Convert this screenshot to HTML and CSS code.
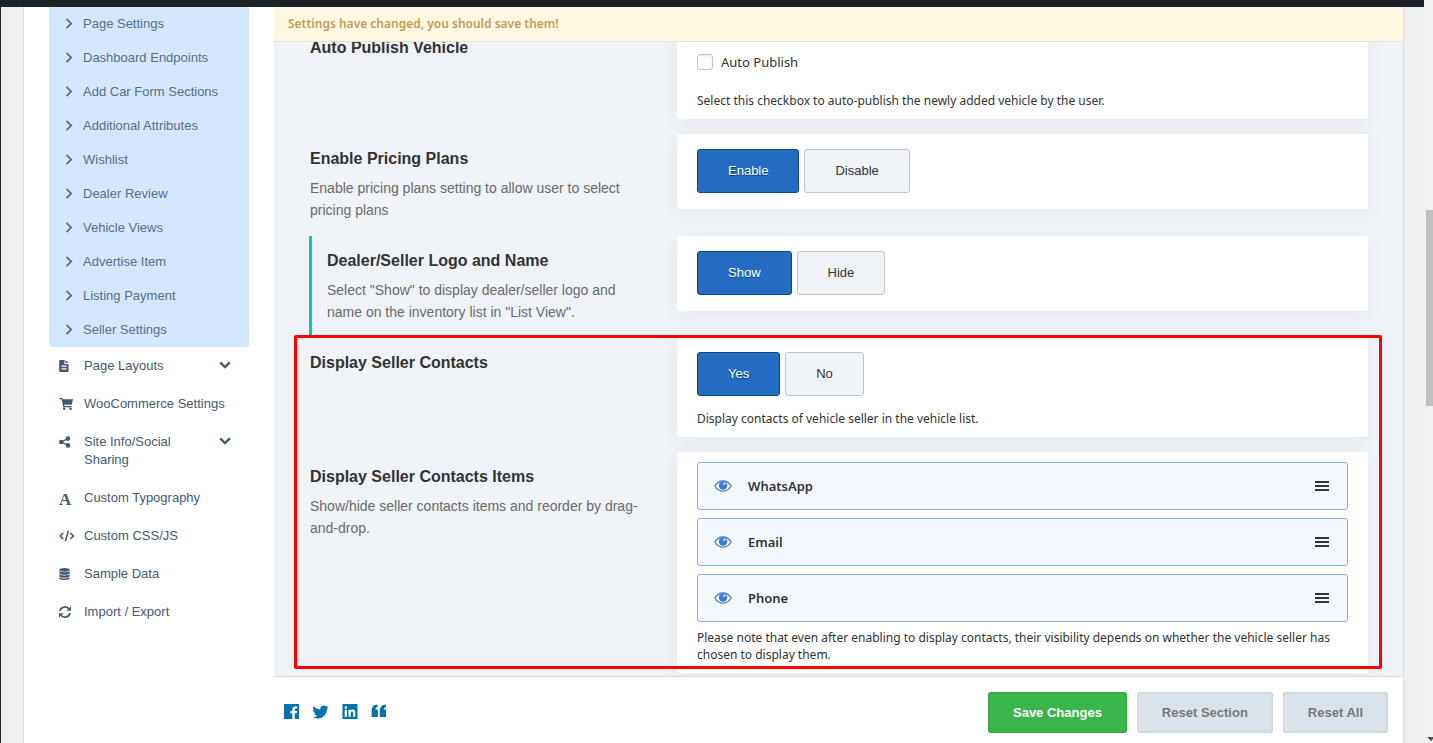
FILE: index.html
```html
<!DOCTYPE html>
<html lang="en">
<head>
  <meta charset="UTF-8" />
  <meta name="viewport" content="width=device-width, initial-scale=1.0" />
  <title>Theme Options</title>
  <link rel="stylesheet" href="styles.css">
</head>
<body>

  <!-- Shared icon shapes -->
  <svg class="icon-defs" aria-hidden="true">
    <symbol id="chevron-right" viewBox="0 0 8 11">
      <path d="M1.500 .8l4.700 4.700-4.700 4.700" fill="none" stroke="currentColor" stroke-width="1.800" />
    </symbol>
    <symbol id="chevron-down" viewBox="0 0 12 8">
      <path d="M1.200 1.300L6 6l4.800-4.700" fill="none" stroke="currentColor" stroke-width="2.400" />
    </symbol>
    <symbol id="eye" viewBox="0 0 18 12">
      <path d="M.8 6C3 2.400 5.800.8 9 .8S15 2.400 17.200 6C15 9.600 12.200 11.200 9 11.200S3 9.600.8 6z" fill="none" stroke="currentColor" stroke-width="1.200" />
      <circle cx="9" cy="5.500" r="4.200" fill="currentColor" />
      <circle cx="10.300" cy="3.800" r="1.100" fill="#f3f8ff" />
    </symbol>
  </svg>

  <div class="screen">
    <div class="admin-bar"></div>

    <div class="panel">
      <nav class="sidebar">
        <ul class="submenu">
          <li><a href="#"><svg class="chevron"><use href="#chevron-right" /></svg>Page Settings</a></li>
          <li><a href="#"><svg class="chevron"><use href="#chevron-right" /></svg>Dashboard Endpoints</a></li>
          <li><a href="#"><svg class="chevron"><use href="#chevron-right" /></svg>Add Car Form Sections</a></li>
          <li><a href="#"><svg class="chevron"><use href="#chevron-right" /></svg>Additional Attributes</a></li>
          <li><a href="#"><svg class="chevron"><use href="#chevron-right" /></svg>Wishlist</a></li>
          <li><a href="#"><svg class="chevron"><use href="#chevron-right" /></svg>Dealer Review</a></li>
          <li><a href="#"><svg class="chevron"><use href="#chevron-right" /></svg>Vehicle Views</a></li>
          <li><a href="#"><svg class="chevron"><use href="#chevron-right" /></svg>Advertise Item</a></li>
          <li><a href="#"><svg class="chevron"><use href="#chevron-right" /></svg>Listing Payment</a></li>
          <li><a href="#"><svg class="chevron"><use href="#chevron-right" /></svg>Seller Settings</a></li>
        </ul>

        <ul class="menu">
          <li><a href="#">
            <svg class="menu-icon" viewBox="0 0 16 14"><path fill-rule="evenodd" d="M1 1h4.500v4h4v7.200a.8.8 0 0 1-.8.8H1a.8.8 0 0 1-.8-.8V1.800A.8.8 0 0 1 1 1zM6.500 1l3 3h-3zM2.500 6.500v1.200h5V6.500zM2.500 9.300v1.200h5V9.300z" /></svg>
            <span>Page Layouts</span><svg class="arrow"><use href="#chevron-down" /></svg>
          </a></li>
          <li><a href="#">
            <svg class="menu-icon" viewBox="0 0 16 14"><path d="M.5 1h2.800l.4 1.300H14l-1.300 5.500H5.200l.3 1.200h7v1.200H4.400L2.500 2.200h-2z" /><circle cx="5.200" cy="11.800" r="1.300" /><circle cx="11.600" cy="11.800" r="1.300" /></svg>
            <span>WooCommerce Settings</span>
          </a></li>
          <li><a href="#">
            <svg class="menu-icon" viewBox="0 0 16 14"><circle cx="2.300" cy="7" r="2.300" /><circle cx="9" cy="3.600" r="2.300" /><circle cx="9" cy="10.400" r="2.300" /><path d="M9 3.600L2.300 7 9 10.400" fill="none" stroke="currentColor" stroke-width="1.300" /></svg>
            <span>Site Info/Social Sharing</span><svg class="arrow"><use href="#chevron-down" /></svg>
          </a></li>
          <li><a href="#">
            <span class="menu-icon letter" aria-hidden="true">A</span>
            <span>Custom Typography</span>
          </a></li>
          <li><a href="#">
            <svg class="menu-icon" viewBox="0 0 16 14"><path d="M4.300 4L1.100 7l3.200 3M11.200 4l3.200 3-3.200 3M9.300 1.800L6.400 12.200" fill="none" stroke="currentColor" stroke-width="1.500" /></svg>
            <span>Custom CSS/JS</span>
          </a></li>
          <li><a href="#">
            <svg class="menu-icon" viewBox="0 0 16 14"><ellipse cx="5.500" cy="2.800" rx="5.200" ry="1.900" /><path d="M.3 4c1.500 1.600 8.900 1.600 10.400 0v2.200c-1 2-9.400 2-10.400 0zM.3 7.200c1.500 1.600 8.900 1.600 10.400 0v2.100c-1 2-9.400 2-10.400 0zM.3 10.300c1.500 1.600 8.900 1.600 10.400 0v1.200c-1 2-9.400 2-10.400 0z" /></svg>
            <span>Sample Data</span>
          </a></li>
          <li><a href="#">
            <svg class="menu-icon" viewBox="0 0 16 14"><path d="M1 6a5 5 0 0 1 8.800-2.200M11 8a5 5 0 0 1-8.800 2.200" fill="none" stroke="currentColor" stroke-width="1.700" /><path d="M12 1.200v4.500H7.500zM0 12.800V8.300h4.500z" /></svg>
            <span>Import / Export</span>
          </a></li>
        </ul>
      </nav>

      <main class="content">
        <div class="notice">Settings have changed, you should save them!</div>

        <div class="settings">
          <div class="rows">
            <section class="row">
              <div class="info">
                <h3>Auto Publish Vehicle</h3>
              </div>
              <div class="field has-help">
                <label class="check"><input type="checkbox"> Auto Publish</label>
                <p class="help">Select this checkbox to auto-publish the newly added vehicle by the user.</p>
              </div>
            </section>

            <section class="row">
              <div class="info">
                <h3>Enable Pricing Plans</h3>
                <p>Enable pricing plans setting to allow user to select pricing plans</p>
              </div>
              <div class="field">
                <div class="button-set">
                  <button type="button" class="active">Enable</button>
                  <button type="button">Disable</button>
                </div>
              </div>
            </section>

            <section class="row child">
              <div class="info">
                <h3>Dealer/Seller Logo and Name</h3>
                <p>Select "Show" to display dealer/seller logo and name on the inventory list in "List View".</p>
              </div>
              <div class="field">
                <div class="button-set">
                  <button type="button" class="active">Show</button>
                  <button type="button">Hide</button>
                </div>
              </div>
            </section>

            <!-- Highlighted settings -->
            <div class="highlight">
              <section class="row">
                <div class="info">
                  <h3>Display Seller Contacts</h3>
                </div>
                <div class="field has-help">
                  <div class="button-set">
                    <button type="button" class="active">Yes</button>
                    <button type="button">No</button>
                  </div>
                  <p class="help">Display contacts of vehicle seller in the vehicle list.</p>
                </div>
              </section>

              <section class="row">
                <div class="info">
                  <h3>Display Seller Contacts Items</h3>
                  <p>Show/hide seller contacts items and reorder by drag-and-drop.</p>
                </div>
                <div class="field sorter">
                  <ul class="sort-list">
                    <li><svg class="eye"><use href="#eye" /></svg><span>WhatsApp</span><i class="handle"></i></li>
                    <li><svg class="eye"><use href="#eye" /></svg><span>Email</span><i class="handle"></i></li>
                    <li><svg class="eye"><use href="#eye" /></svg><span>Phone</span><i class="handle"></i></li>
                  </ul>
                  <p class="help">Please note that even after enabling to display contacts, their visibility depends on whether the vehicle seller has chosen to display them.</p>
                </div>
              </section>
            </div>
          </div>
        </div>

        <footer class="footer">
          <div class="social">
            <a href="#" aria-label="Facebook"><svg viewBox="0 0 16 16"><path fill-rule="evenodd" d="M0 0h15v15h-4.200V9.300h2l.3-2.300h-2.300V5.700c0-.7.3-1.100 1.200-1.100h1.200V2.500c-.3 0-1-.1-1.800-.1-1.900 0-3.100 1.100-3.100 3V7H6.300v2.300h2V15H0z" /></svg></a>
            <a href="#" aria-label="Twitter"><svg viewBox="0 0 24 24"><path d="M23.200 4.569c-.885.389-1.830.654-2.825.775 1.014-.611 1.794-1.574 2.163-2.723-.951.555-2.005.959-3.127 1.184-.896-.959-2.173-1.559-3.591-1.559-2.717 0-4.920 2.203-4.920 4.917 0 .39.045.765.127 1.124C6.937 8.094 3.312 6.130.886 3.161c-.427.722-.666 1.561-.666 2.475 0 1.710.87 3.213 2.188 4.096-.807-.026-1.566-.248-2.228-.616v.061c0 2.385 1.693 4.374 3.946 4.827-.413.111-.849.171-1.296.171-.314 0-.615-.03-.916-.086.631 1.953 2.445 3.377 4.604 3.417-1.680 1.319-3.809 2.105-6.102 2.105-.39 0-.779-.023-1.170-.067 2.189 1.394 4.768 2.209 7.557 2.209 9.054 0 13.999-7.496 13.999-13.986 0-.209 0-.42-.015-.63.961-.689 1.800-1.560 2.460-2.548z" /></svg></a>
            <a href="#" aria-label="LinkedIn"><svg viewBox="0 0 16 16"><path fill-rule="evenodd" d="M.5 0h15v15H.5zM2.700 5.700v7.100h2.200V5.700zM3.800 2.200a1.250 1.250 0 1 0 0 2.500 1.250 1.250 0 0 0 0-2.500zM6.500 5.700v7.100h2.200V9.100c0-1 .4-1.600 1.200-1.600s1.200.6 1.200 1.600v3.700h2.200V8.700c0-2-1-3.200-2.600-3.200-.9 0-1.600.4-2 1.100v-.9z" /></svg></a>
            <a href="#" aria-label="Quotes"><svg viewBox="0 0 16 16"><path d="M6.500 .5v2.400C5.100 3.100 4.400 4 4.400 5.500h2.500V13H.6V7C.6 2.900 2.600.7 6.500 .5zM15 .5v2.400c-1.400.2-2.100 1.100-2.100 2.600H15V13H8.800V7C8.800 2.900 11.100.7 15 .5z" /></svg></a>
          </div>
          <div class="actions">
            <button type="button" class="save">Save Changes</button>
            <button type="button">Reset Section</button>
            <button type="button">Reset All</button>
          </div>
        </footer>
      </main>
    </div>
  </div>

  <div class="scrollbar"><div class="thumb"></div><div class="scroll-arrow"></div></div>

</body>
</html>
```
FILE: styles.css
```css
* {
  box-sizing: border-box;
}

body {
  margin: 0;
  height: 100vh;
  background: #efefef;
  color: #333;
  font-family: "Liberation Sans", Arial, sans-serif;
  font-size: 13px;
  display: flex;
  overflow: hidden;
}

ul, h3, p {
  margin: 0;
  padding: 0;
  list-style: none;
}

a {
  color: inherit;
  text-decoration: none;
}

button {
  font-family: inherit;
  font-size: 13px;
  cursor: pointer;
}

svg {
  display: block;
  fill: currentColor;
}

.icon-defs {
  position: absolute;
  width: 0;
  height: 0;
}

.screen {
  flex: 1;
  min-width: 0;
  display: flex;
  flex-direction: column;
  border-left: 1px solid #1d2327;
}

.admin-bar {
  flex: none;
  height: 7px;
  background: #1d2327;
}

.panel {
  flex: 1;
  min-height: 0;
  display: flex;
  margin: 0 20px 0 22px;
  background: #fff;
  border: 1px solid #dcdcde;
  border-width: 0 1px;
}

/* Sidebar */
.sidebar {
  flex: none;
  width: 250px;
  padding: 0 25px;
  overflow: hidden;
  color: #465a73;
}

.submenu {
  margin-top: -1px;
  padding-bottom: 1px;
  background: #d5e7ff;
  border-radius: 0 0 3px 3px;
  color: #576e8c;
}

.submenu a {
  display: flex;
  align-items: center;
  height: 34px;
  padding-left: 16px;
}

.chevron {
  width: 8px;
  height: 11px;
  margin-right: 10px;
}

.menu a {
  display: flex;
  padding: 10px 18px 10px 10px;
  line-height: 18px;
}

.menu-icon {
  flex: none;
  width: 16px;
  height: 14px;
  margin: 2px 9px 0 0;
}

.letter {
  font-family: "Liberation Serif", serif;
  font-size: 17px;
  font-weight: bold;
}

.arrow {
  flex: none;
  width: 12px;
  height: 8px;
  margin: 4px 0 0 auto;
}

/* Content */
.content {
  flex: 1;
  min-width: 0;
  display: flex;
  flex-direction: column;
}

.notice {
  position: relative;
  z-index: 1;
  height: 35px;
  padding-left: 14px;
  line-height: 34px;
  background: #fdf7e2;
  border-bottom: 1px solid #e6e3d8;
  color: #c59b57;
  font-family: "Noto Sans", sans-serif;
  font-size: 12px;
  font-weight: 600;
}

.settings {
  flex: 1;
  min-height: 0;
  overflow: hidden;
  background: #eff3f8;
}

.rows {
  margin-top: -19px;
  padding: 0 35px;
}

.row {
  display: flex;
  align-items: flex-start;
}

.info {
  flex: none;
  width: 368px;
  padding: 16px 36px 15px 1px;
}

.info h3 {
  font-size: 16px;
  line-height: 18px;
}

.info p {
  margin-top: 9px;
  color: #6b6b6b;
  font-size: 14px;
  line-height: 22px;
}

.child .info {
  padding-left: 15px;
  border-left: 3px solid #00d09c;
}

.field {
  flex: 1;
  min-width: 0;
  margin-bottom: 15px;
  padding: 15px 20px;
  background: #fff;
  border-radius: 3px;
  box-shadow: 0 5px 20px rgba(60, 60, 60, 0.05);
}

.has-help {
  padding: 14px 20px 10px;
}

.help {
  margin-top: 13px;
  font-family: "Noto Sans", sans-serif;
  font-size: 12px;
  line-height: 17px;
}

.check {
  display: flex;
  align-items: center;
  gap: 8px;
  height: 18px;
  margin: 16px 0 21px;
  font-family: "Noto Sans", sans-serif;
}

.check + .help {
  margin-top: 0;
}

.check input {
  appearance: none;
  width: 16px;
  height: 16px;
  margin: 0;
  border: 1px solid #b4c6de;
  border-radius: 3px;
  box-shadow: inset 0 1px 2px rgba(0, 0, 0, 0.1);
}

.button-set {
  display: flex;
  align-items: flex-start;
  gap: 5px;
  height: 45px;
}

.button-set button {
  height: 44px;
  padding: 0 30px 2px;
  background: #eff3f8;
  border: 1px solid #c4c4c4;
  border-radius: 3px;
  color: #333;
}

.button-set .active {
  background: #246cc2;
  border-color: #0a4b78;
  color: #fff;
  text-shadow: 0 1px 0 #0a4b78;
}

.highlight {
  position: relative;
}

.highlight::after {
  content: "";
  position: absolute;
  inset: -3px -14px 19px -15px;
  border: 3px solid #f00;
  border-radius: 2px;
  pointer-events: none;
}

.sorter {
  padding: 10px 20px;
}

.sorter .help {
  margin-top: 7px;
}

.sort-list {
  display: grid;
  gap: 8px;
}

.sort-list li {
  display: flex;
  align-items: center;
  height: 48px;
  padding: 0 18px 0 16px;
  background: #f3f8ff;
  border: 1px solid #8fb0dc;
  border-radius: 3px;
  font-family: "Noto Sans", sans-serif;
  font-weight: 600;
}

.eye {
  width: 18px;
  height: 12px;
  margin-right: 16px;
  color: #3b7ad0;
}

.handle {
  width: 14px;
  height: 10px;
  margin-left: auto;
  border: 2px solid #333;
  border-width: 2px 0;
  background: linear-gradient(#333, #333) center / 14px 2px no-repeat;
}

/* Footer */
.footer {
  flex: none;
  display: flex;
  justify-content: space-between;
  padding: 15px 15px 10px 10px;
  border-top: 1px solid #dcdcde;
}

.social {
  display: flex;
  gap: 13px;
  padding-top: 12px;
  color: #0073aa;
}

.social svg {
  width: 16px;
  height: 16px;
}

.actions {
  display: flex;
  gap: 10px;
}

.actions button {
  height: 41px;
  padding: 0 25px;
  background: #dbe3ea;
  border: 0;
  border-radius: 3px;
  box-shadow: inset 0 0 3px rgba(0, 0, 0, 0.15);
  color: #75777b;
  font-weight: bold;
}

.actions .save {
  background: #39b54a;
  color: #fff;
}

/* Window scrollbar */
.scrollbar {
  flex: none;
  display: flex;
  flex-direction: column;
  justify-content: space-between;
  width: 9px;
  padding: 210px 0 2px 2px;
  background: #f1f1f1;
}

.thumb {
  height: 196px;
  background: #c1c1c1;
}

.scroll-arrow {
  margin-left: 1px;
  border: 4px solid transparent;
  border-top-color: #505050;
  border-bottom: 0;
}
```
